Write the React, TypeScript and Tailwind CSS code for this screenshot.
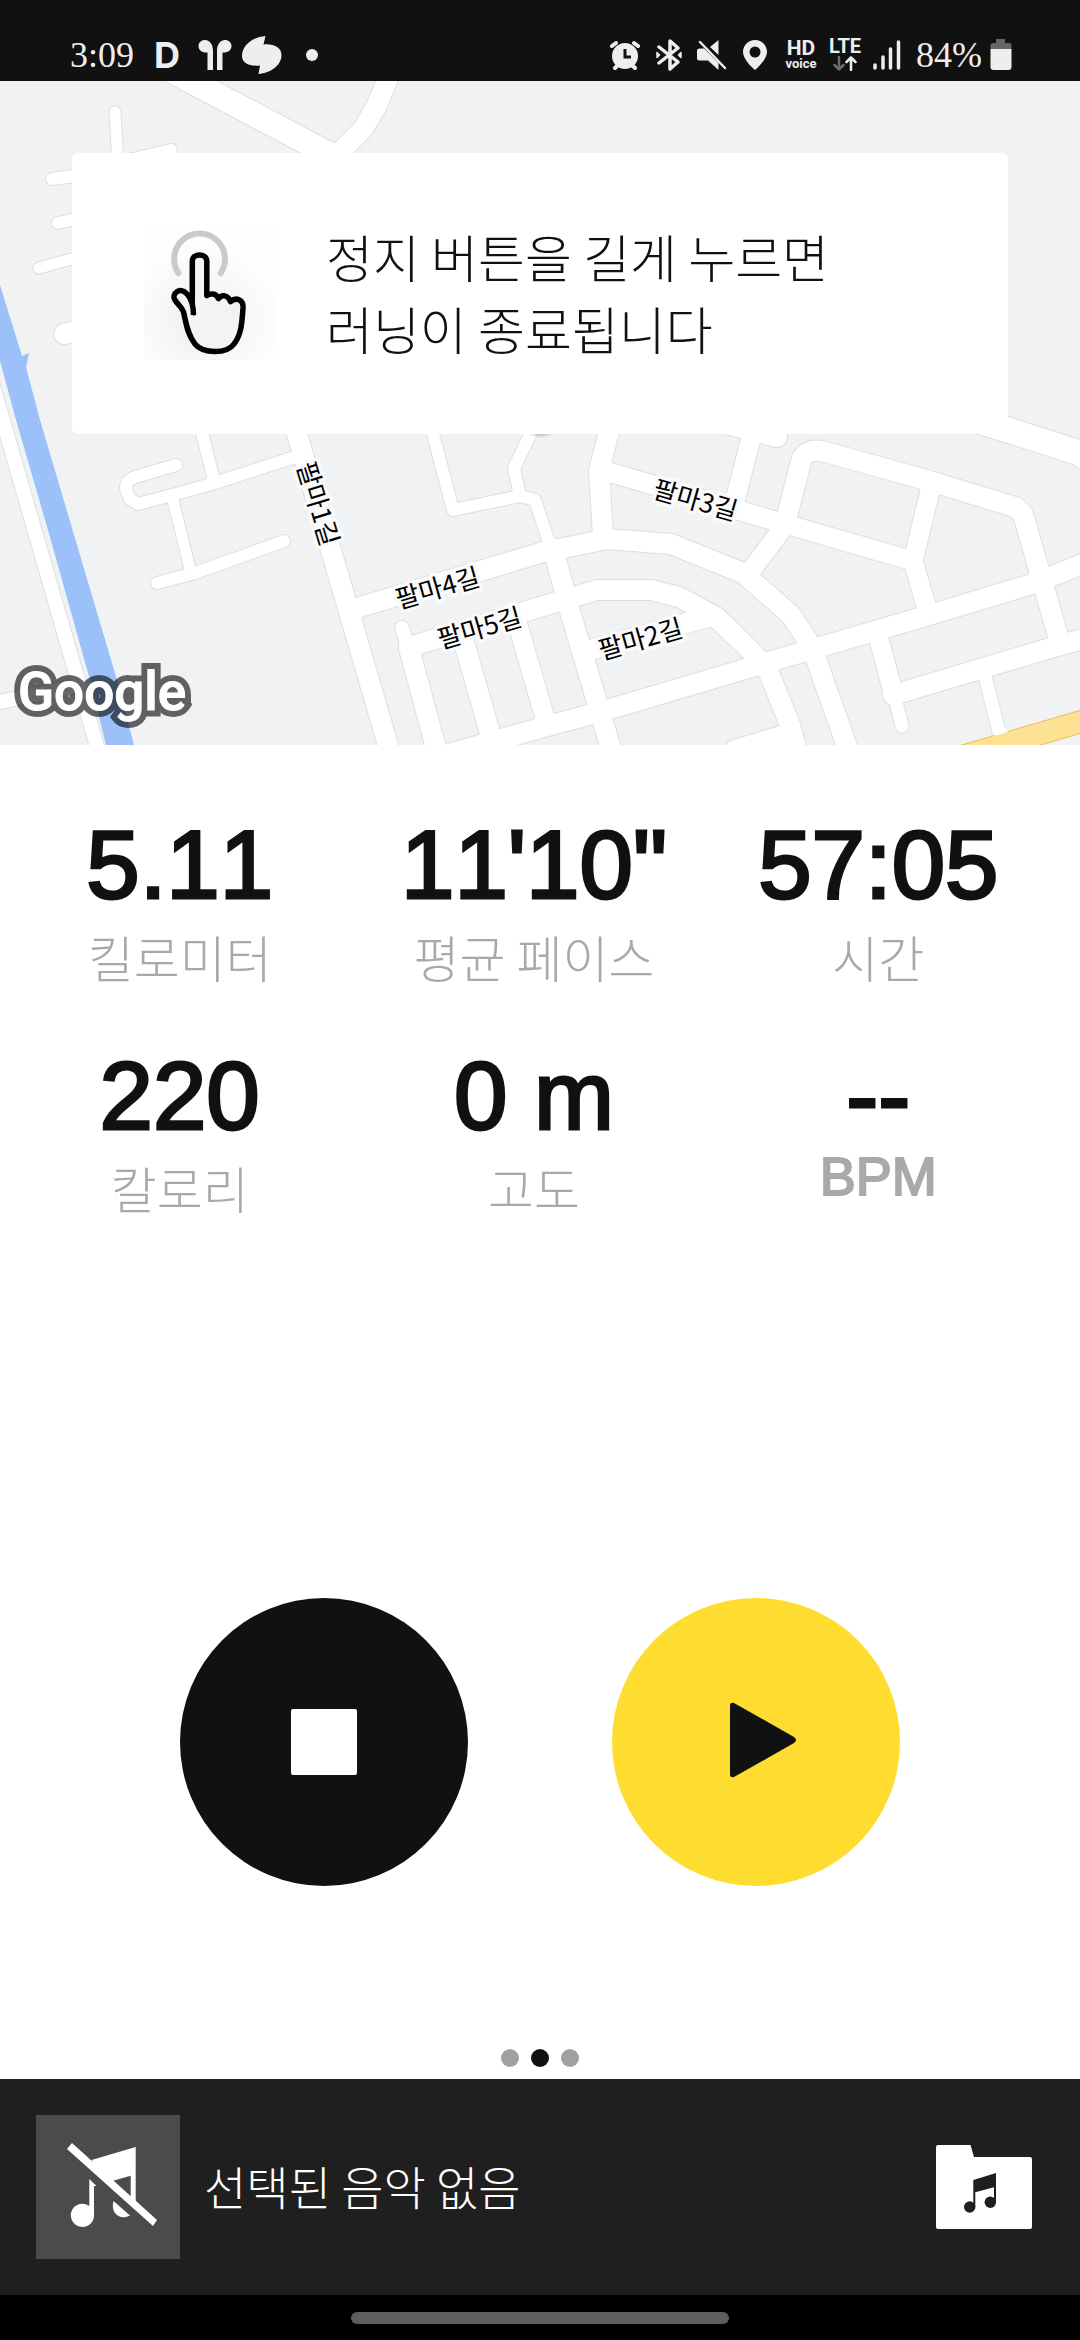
import React from "react";

type Road = { w: number; d: string };

const ROADS: Road[] = [
  { w: 24, d: "M170 70 L325 152 L420 205" },
  { w: 20, d: "M391 72 L376 107 L363 129 L340 152" },
  { w: 11, d: "M115 112 L118 165" },
  { w: 12, d: "M171 150 L120 162" },
  { w: 12, d: "M52 179 L90 174" },
  { w: 12, d: "M58 223 L90 216" },
  { w: 11, d: "M39 268 L90 254" },
  { w: 20, d: "M64 334 L95 326" },
  { w: 14, d: "M-20 342 L-3 400 L98 750" },
  { w: 14, d: "M-10 704 L72 687" },
  { w: 12, d: "M176 465 L135 477 Q123 482 127 492 L130 499 L138 504 L172 495 L215 483 L295 457" },
  { w: 12, d: "M200 425 L214 481" },
  { w: 11, d: "M172 496 L191 573" },
  { w: 12, d: "M157 583 L195 573 L284 541" },
  { w: 20, d: "M290 410 L390 752" },
  { w: 20, d: "M350 610 L540 553 L607 539 L671 544 L743 573 L791 615 L808 641 L816 659 L849 752" },
  { w: 14, d: "M402 628 L409 650" },
  { w: 20, d: "M409 648 L437 752" },
  { w: 20, d: "M409 647 L540 607 L597 590 L651 590 L679 597 L716 617 L756 656 L769 673 L790 725 L797 752" },
  { w: 20, d: "M590 650 L712 616" },
  { w: 20, d: "M461 632 L492 740" },
  { w: 19, d: "M517 622 L545 718" },
  { w: 12, d: "M428 415 L453 510 L520 496 L514 468 L535 425" },
  { w: 12, d: "M520 496 L535 500 L553 555" },
  { w: 20, d: "M553 548 L569 608 L597 702 L612 752" },
  { w: 20, d: "M612 420 L599 470 L603 535" },
  { w: 19, d: "M602 470 L792 526 L913 561 L928 612" },
  { w: 19, d: "M913 561 L931 487" },
  { w: 20, d: "M786 520 L802 458 Q808 449 822 451 L933 482 L1015 507 L1023 514 L1060 643" },
  { w: 19, d: "M783 528 L750 572" },
  { w: 19, d: "M754 427 L735 500" },
  { w: 20, d: "M715 421 L777 437" },
  { w: 25, d: "M960 415 L1008 430 L1080 453 L1095 466" },
  { w: 20, d: "M435 758 L540 728 L600 712 L762 664 L926 616 L1032 584 L1095 559" },
  { w: 20, d: "M893 695 L1057 646 L1095 636" },
  { w: 19, d: "M878 636 L893 692" },
  { w: 13, d: "M893 690 L902 726" },
  { w: 13, d: "M984 672 L1001 740" },
  { w: 20, d: "M788 734 L735 750" },
];

const STREETS = [
  { name: "팔마1길", x: 320, y: 503, angle: 73 },
  { name: "팔마4길", x: 437, y: 586, angle: -16 },
  { name: "팔마5길", x: 479, y: 626, angle: -16 },
  { name: "팔마3길", x: 696, y: 498, angle: 16 },
  { name: "팔마2길", x: 640, y: 637, angle: -16 },
];

const METRICS = [
  { value: "5.11", label: "킬로미터" },
  { value: "11'10\"", label: "평균 페이스" },
  { value: "57:05", label: "시간" },
  { value: "220", label: "칼로리" },
  { value: "0 m", label: "고도" },
  { value: "--", label: "BPM" },
];

function StatusBar() {
  return (
    <header className="flex h-[81px] shrink-0 items-center justify-between bg-[#111111] pt-7 pr-[68px] pl-[70px] text-[#eeeeee]">
      <div className="flex items-center">
        <time className="font-['Liberation_Serif',serif] text-[36px] leading-none">3:09</time>
        <span className="ml-5 font-['Inter',sans-serif] text-[36px] leading-none font-bold">D</span>
        <svg className="ml-[18px] h-8 w-[34px]" viewBox="0 0 34 32" fill="currentColor" aria-hidden="true">
          <path d="M9.500 31 V13.500 C4 14 .5 11 .5 7 C.5 3.500 3.500 1 7 1 C11.500 1 15 5 15 12 V31 Z" />
          <path d="M24.500 31 V13.500 C30 14 33.500 11 33.500 7 C33.500 3.500 30.500 1 27 1 C22.500 1 19 5 19 12 V31 Z" />
        </svg>
        <svg className="ml-2.5 h-[38px] w-10" viewBox="0 0 40 38" fill="currentColor" aria-hidden="true">
          <path d="M23.500 0 L21.500 8.500 C31 7.500 39.500 11 39.500 19 C39.500 29 29 37 16.500 38 L18 29.500 C7 30.500 0 27 0 20 C0 9 11 1 23.500 0 Z" />
        </svg>
        <span className="ml-6 size-3 rounded-full bg-[#eeeeee]" />
      </div>
      <div className="flex items-center">
        <svg className="h-8 w-[30px]" viewBox="0 0 30 32" aria-hidden="true">
          <g stroke="#eeeeee" strokeWidth="4" strokeLinecap="round">
            <path d="M2 7 L6 4 M28 7 L24 4 M5 29 L8 26 M25 29 L22 26" />
          </g>
          <circle cx="15" cy="17" r="13" fill="#eeeeee" />
          <path d="M15 10 V18 H21" stroke="#111111" strokeWidth="3" fill="none" />
        </svg>
        <svg className="ml-[15px] h-8 w-7" viewBox="0 0 28 32" fill="none" stroke="#eeeeee" strokeWidth="3.500" strokeLinecap="round" strokeLinejoin="round" aria-hidden="true">
          <path d="M4 8 L23 23 L15 30 V2 L23 9 L4 24" />
          <path d="M2 13.500 L4.500 16 L2 18.500 Z M26 13.500 L23.500 16 L26 18.500 Z" strokeWidth="1.500" fill="#eeeeee" />
        </svg>
        <svg className="ml-3.5 h-8 w-[30px]" viewBox="0 0 30 32" aria-hidden="true">
          <path d="M0 12 Q0 9.500 2.500 9.500 H7 L21.500 24 V31 L11 21.500 H2.500 Q0 21.500 0 19 Z M21.500 1 V16 L13 8 Z" fill="#eeeeee" />
          <path d="M3 3 L28 29" stroke="#eeeeee" strokeWidth="2.500" strokeLinecap="round" />
        </svg>
        <svg className="ml-4 h-8 w-6" viewBox="0 0 24 32" fill="#eeeeee" fillRule="evenodd" aria-hidden="true">
          <path d="M12 1 C18.500 1 24 6 24 13 C24 19 17 27 12 31 C7 27 0 19 0 13 C0 6 5.500 1 12 1 Z M12 7.500 A5.500 5.500 0 1 0 12 18.500 A5.500 5.500 0 1 0 12 7.500 Z" />
        </svg>
        <div className="ml-[17px] flex w-[34px] flex-col items-center font-['Roboto',sans-serif] font-bold">
          <span className="text-[21px] leading-[18px]">HD</span>
          <span className="text-[13px] leading-[13px]">voice</span>
        </div>
        <div className="ml-2.5 flex w-[34px] flex-col items-center">
          <span className="font-['Roboto',sans-serif] text-[20px] leading-4 font-bold">LTE</span>
          <svg className="mt-0.5 h-[15px] w-6" viewBox="0 0 24 15" fill="none" strokeWidth="2.500" strokeLinecap="round" strokeLinejoin="round" aria-hidden="true">
            <path d="M6 1 V13.500 M1.500 9 L6 13.500 L10.500 9" stroke="#6b6b6b" />
            <path d="M18 14 V1.500 M13.500 6 L18 1.500 L22.500 6" stroke="#eeeeee" />
          </svg>
        </div>
        <svg className="ml-[11px] h-8 w-7" viewBox="0 0 28 32" stroke="#eeeeee" strokeWidth="3.500" strokeLinecap="round" aria-hidden="true">
          <path d="M2 26 V29 M10 18 V29 M17.500 10 V29 M25.500 3 V29" />
        </svg>
        <span className="ml-[15px] font-['Liberation_Serif',serif] text-[36px] leading-none">84%</span>
        <svg className="ml-2 h-8 w-[22px]" viewBox="0 0 22 32" aria-hidden="true">
          <path d="M6 0 H15 V4 H19 Q21.500 4 21.500 7 V10 H.5 V7 Q.5 4 3 4 H6 Z" fill="#666666" />
          <path d="M.5 10 H21.500 V28 Q21.500 31 18.500 31 H3.500 Q.5 31 .5 28 Z" fill="#eeeeee" />
        </svg>
      </div>
    </header>
  );
}

function RoadMap() {
  return (
    <svg
      className="absolute inset-0 h-full w-full bg-[#f0f2f4]"
      viewBox="0 81 1080 664"
      preserveAspectRatio="xMidYMid slice"
      role="img"
      aria-label="지도"
    >
      <defs>
        <radialGradient id="pin-shadow">
          <stop offset="0" stopColor="#999999" stopOpacity="0.7" />
          <stop offset="1" stopColor="#999999" stopOpacity="0" />
        </radialGradient>
        <text id="brand" x="18" y="710" fontSize="53" fontWeight="500" fontFamily="Roboto, sans-serif">
          Google
        </text>
      </defs>
      <g fill="none" stroke="#dcdfe2" strokeLinecap="round" strokeLinejoin="round">
        {ROADS.map((r) => (
          <path key={r.d} d={r.d} strokeWidth={r.w + 2} />
        ))}
      </g>
      <g fill="none" stroke="#ffffff" strokeLinecap="round" strokeLinejoin="round">
        {ROADS.map((r) => (
          <path key={r.d} d={r.d} strokeWidth={r.w} />
        ))}
      </g>
      <path d="M0 285 L22 356 L29 353 L26 367 L40 420 L117 680 L134 745 H106 L90 680 L48 530 L16 420 L0 361 Z" fill="#9cc0f9" />
      <path d="M955 747 L1085 709 V732 L1034 747 Z" fill="#fde293" stroke="#e9bb55" strokeWidth="1" />
      <path d="M993 731 L1006 728 L1008 732 L995 736 Z" fill="#ffffff" />
      <ellipse cx="541" cy="433" rx="14" ry="5" fill="url(#pin-shadow)" />
      <g
        fontFamily="'Noto Sans CJK KR', sans-serif"
        fontSize="26"
        fontWeight="400"
        textAnchor="middle"
        fill="#000000"
        stroke="#fafafa"
        strokeWidth="7"
        strokeLinejoin="round"
        paintOrder="stroke"
      >
        {STREETS.map((s) => (
          <text key={s.name} x={s.x} y={s.y} dominantBaseline="central" transform={`rotate(${s.angle} ${s.x} ${s.y})`}>
            {s.name}
          </text>
        ))}
      </g>
      <use href="#brand" fill="#000000" stroke="#000000" strokeWidth="13" opacity="0.6" />
      <use href="#brand" fill="#ffffff" stroke="#ffffff" strokeWidth="1" />
    </svg>
  );
}

function HoldIcon() {
  return (
    <svg className="size-[132px] shrink-0" viewBox="0 0 132 132" fill="none" aria-hidden="true">
      <defs>
        <radialGradient id="hold-glow" cx="0.45" cy="0.7" r="0.6">
          <stop offset="0" stopColor="#efefef" />
          <stop offset="1" stopColor="#fefefe" />
        </radialGradient>
      </defs>
      <rect width="132" height="132" fill="url(#hold-glow)" />
      <path d="M34.400 45 A25.400 25.400 0 1 1 76.700 45" stroke="#cacaca" strokeWidth="6" strokeLinecap="round" />
      <path
        d="M49.500 87 C49.500 80 48.500 72 43 66 C36 58 27 66 31 72 C34 77 38 79 39.500 84 C42 94 43 106 51 116 C59 126 83 126 90 116 C98 106 98 92 99 80 C99.500 71 92 69 86.500 73.500 C84 67 78 66 74.500 70.500 C72 65 67 65 62.800 67.500 V33 C62.500 25 48.500 25 48.300 33 V70"
        fill="#f3f3f3"
        stroke="#000000"
        strokeWidth="5.500"
        strokeLinejoin="round"
      />
      <path d="M45.500 66 H51 V86 Q50 90 48.500 86 Z" fill="#000000" />
    </svg>
  );
}

export default function App() {
  return (
    <div className="flex min-h-screen flex-col bg-white font-['Liberation_Sans','Noto_Sans_CJK_KR',sans-serif] text-[#111111]">
      <StatusBar />
      <section className="relative min-h-[664px] shrink-0 overflow-hidden px-[72px] pt-[72px]">
        <RoadMap />
        <div
          role="status"
          className="relative flex min-h-[281px] items-center gap-[50px] rounded-md bg-white pl-[72px] font-['Noto_Sans_CJK_KR',sans-serif] text-[51px] leading-[72px] font-light"
        >
          <HoldIcon />
          <p className="pb-1">
            정지 버튼을 길게 누르면
            <br />
            러닝이 종료됩니다
          </p>
        </div>
      </section>

      <main className="flex grow flex-col">
        <dl className="grid grid-cols-[36fr_35fr_34fr] gap-y-[57px] pt-[72px] pr-8 text-center">
          {METRICS.map((m) => (
            <div key={m.label} className="flex flex-col-reverse justify-end gap-2">
              {m.label === "BPM" ? (
                <dt className="text-[54px] leading-[48px] text-[#a9a9a9] [-webkit-text-stroke:2px_#a9a9a9]">{m.label}</dt>
              ) : (
                <dt className="font-['Noto_Sans_CJK_KR',sans-serif] text-[50px] leading-[70px] font-light text-[#a9a9a9]">
                  {m.label}
                </dt>
              )}
              <dd className="text-[96px] leading-[96px] [-webkit-text-stroke:3px_#111111] [font-kerning:none]">{m.value}</dd>
            </div>
          ))}
        </dl>

        <div className="mt-auto flex justify-center gap-36">
          <button type="button" aria-label="정지" className="flex size-72 items-center justify-center rounded-full bg-[#111111]">
            <span className="size-[66px] rounded-xs bg-white" />
          </button>
          <button type="button" aria-label="재개" className="flex size-72 items-center justify-center rounded-full bg-[#ffdd30] pb-1">
            <svg className="h-20 w-20" viewBox="0 0 80 80" aria-hidden="true">
              <path d="M18 3 L78 37 Q82 40 78 43 L18 77 Q14 78 14 74 V6 Q14 2 18 3 Z" fill="#111111" />
            </svg>
          </button>
        </div>

        <div className="mt-[163px] mb-3 flex justify-center gap-3">
          <span className="size-[18px] rounded-full bg-[#a0a0a0]" />
          <span className="size-[18px] rounded-full bg-[#111111]" />
          <span className="size-[18px] rounded-full bg-[#a0a0a0]" />
        </div>
      </main>

      <footer className="shrink-0 bg-black">
        <div className="flex items-center bg-[#1f1f1f] px-9 py-9 text-white">
          <svg className="size-36 shrink-0 bg-[#4b4b4b]" viewBox="0 0 144 144" fill="#ffffff" aria-hidden="true">
            <path d="M31 34 L36 28 L121 105 L117 111 Z" />
            <path d="M55.500 45 L99.700 32 V88 L94.700 83 V60.700 L77.300 65.700 L60 52 Z" />
            <path d="M53.300 64 L60.500 71 L58 71 V101 A11.600 11.600 0 1 1 53.300 91 Z" />
            <path d="M77.500 86 L94 100.500 C84 106 74 98 77.500 86 Z" />
          </svg>
          <p className="ml-6 grow pb-1 font-['Noto_Sans_CJK_KR',sans-serif] text-[46px] leading-[64px] font-light">선택된 음악 없음</p>
          <button type="button" aria-label="음악 선택" className="mr-3 shrink-0">
            <svg className="h-[84px] w-24" viewBox="0 0 96 84" aria-hidden="true">
              <path d="M2 0 H34.500 L38 12 H94 Q96 12 96 14 V82 Q96 84 94 84 H2 Q0 84 0 82 V2 Q0 0 2 0 Z" fill="#ffffff" />
              <g fill="#1f1f1f">
                <path d="M37.300 35 L60 28 V58 H58 V42.300 L39.300 47.300 V62 H37.300 Z" />
                <circle cx="33.700" cy="62" r="5.700" />
                <circle cx="54.300" cy="57.300" r="5.700" />
              </g>
            </svg>
          </button>
        </div>
        <div className="flex h-[45px] items-center justify-center">
          <span className="h-3 w-[35%] rounded-full bg-[#5e5e5e]" />
        </div>
      </footer>
    </div>
  );
}
